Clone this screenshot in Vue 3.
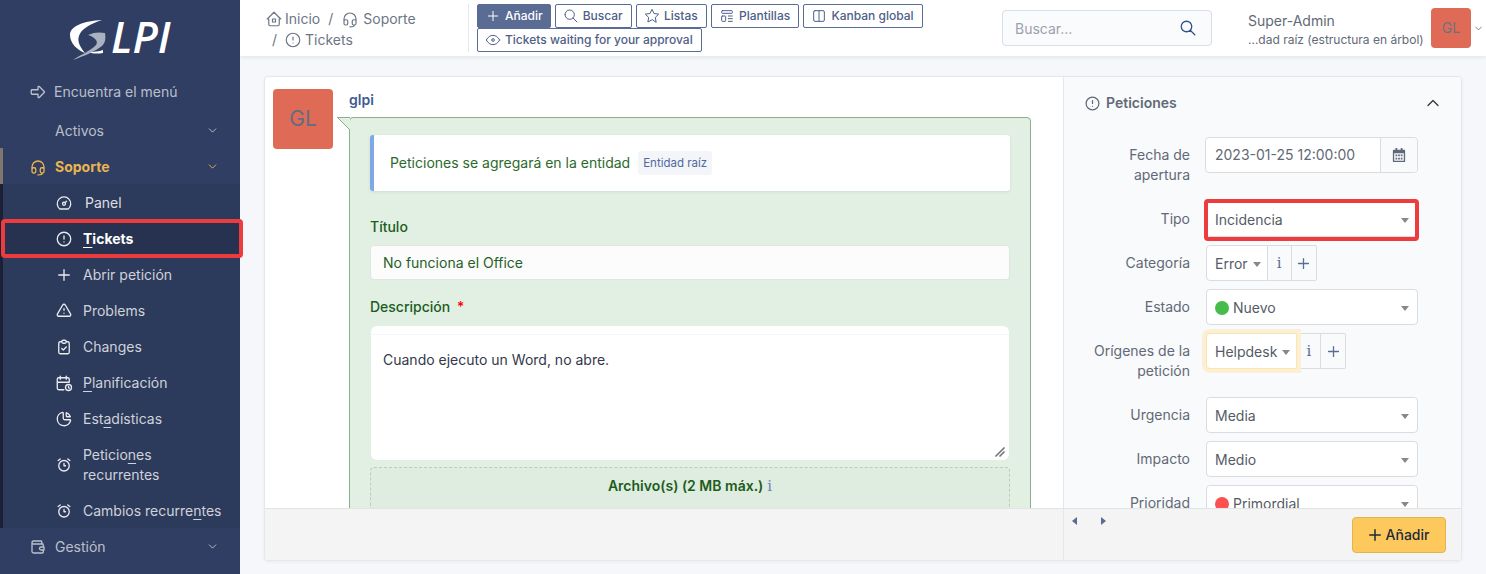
<script setup>
const I = {
  arrow: 'M4 9h8v-3.586a1 1 0 0 1 1.707 -.707l6.586 6.586a1 1 0 0 1 0 1.414l-6.586 6.586a1 1 0 0 1 -1.707 -.707v-3.586h-8a1 1 0 0 1 -1 -1v-4a1 1 0 0 1 1 -1z',
  headset: 'M4 15a2 2 0 0 1 2 -2h1a2 2 0 0 1 2 2v3a2 2 0 0 1 -2 2h-1a2 2 0 0 1 -2 -2zM15 15a2 2 0 0 1 2 -2h1a2 2 0 0 1 2 2v3a2 2 0 0 1 -2 2h-1a2 2 0 0 1 -2 -2zM4 15v-3a8 8 0 0 1 16 0v3M18 20c0 1.657 -2.686 2.5 -6 2.5',
  dash: 'M10 13a2 2 0 1 0 4 0a2 2 0 1 0 -4 0M13.45 11.55l2.05 -2.05M6.4 20a9 9 0 1 1 11.2 0z',
  alert: 'M3 12a9 9 0 1 0 18 0a9 9 0 1 0 -18 0M12 8v4M12 16h.01',
  plus: 'M12 5v14M5 12h14',
  tri: 'M12 9v2m0 4v.01M5 19h14a2 2 0 0 0 1.84 -2.75l-7.1 -12.25a2 2 0 0 0 -3.5 0l-7.1 12.25a2 2 0 0 0 1.75 2.75',
  clip: 'M9 5h-2a2 2 0 0 0 -2 2v12a2 2 0 0 0 2 2h10a2 2 0 0 0 2 -2v-12a2 2 0 0 0 -2 -2h-2M9 5a2 2 0 0 1 2 -2h2a2 2 0 0 1 2 2a2 2 0 0 1 -2 2h-2a2 2 0 0 1 -2 -2M9 14l2 2l4 -4',
  cal: 'M11.795 21h-6.795a2 2 0 0 1 -2 -2v-12a2 2 0 0 1 2 -2h12a2 2 0 0 1 2 2v4M14 18a4 4 0 1 0 8 0a4 4 0 1 0 -8 0M15 3v4M7 3v4M3 11h16M18 16.496v1.504l1 1',
  pie: 'M10 3.2a9 9 0 1 0 10.8 10.8a1 1 0 0 0 -1 -1h-6.8a2 2 0 0 1 -2 -2v-7a.9 .9 0 0 0 -1 -.8M15 3.5a9 9 0 0 1 5.5 5.5h-4.5a1 1 0 0 1 -1 -1v-4.5',
  alarm: 'M5 13a7 7 0 1 0 14 0a7 7 0 1 0 -14 0M12 10v3h2M7 4l-2.75 2M17 4l2.75 2',
  wallet: 'M17 8v-3a1 1 0 0 0 -1 -1h-10a2 2 0 0 0 0 4h12a1 1 0 0 1 1 1v3m0 4v3a1 1 0 0 1 -1 1h-12a2 2 0 0 1 -2 -2v-12M20 12v4h-4a2 2 0 0 1 0 -4h4',
  home: 'M5 12h-2l9 -9l9 9h-2M5 12v7a2 2 0 0 0 2 2h10a2 2 0 0 0 2 -2v-7M10 12h4v4h-4z',
  search: 'M3 10a7 7 0 1 0 14 0a7 7 0 1 0 -14 0M21 21l-6 -6',
  star: 'M12 17.75l-6.172 3.245l1.179 -6.873l-5 -4.867l6.9 -1l3.086 -6.253l3.086 6.253l6.9 1l-5 4.867l1.179 6.873z',
  tpl: 'M5 4h14a1 1 0 0 1 1 1v2a1 1 0 0 1 -1 1h-14a1 1 0 0 1 -1 -1v-2a1 1 0 0 1 1 -1zM5 12h4a1 1 0 0 1 1 1v6a1 1 0 0 1 -1 1h-4a1 1 0 0 1 -1 -1v-6a1 1 0 0 1 1 -1zM14 12h6M14 16h6M14 20h6',
  cols: 'M6 4h12a2 2 0 0 1 2 2v12a2 2 0 0 1 -2 2h-12a2 2 0 0 1 -2 -2v-12a2 2 0 0 1 2 -2zM12 4v16',
  eye: 'M10 12a2 2 0 1 0 4 0a2 2 0 1 0 -4 0M22 12c-2.667 4.667 -6 7 -10 7s-7.333 -2.333 -10 -7c2.667 -4.667 6 -7 10 -7s7.333 2.333 10 7',
  down: 'M6 9l6 6l6 -6',
  up: 'M6 15l6 -6l6 6',
}

const sub = [
  { icon: 'dash', pre: 'Panel', wide: true, bright: true },
  { icon: 'alert', u: 'T', post: 'ickets', active: true },
  { icon: 'plus', pre: 'Abrir petición' },
  { icon: 'tri', pre: 'Problems' },
  { icon: 'clip', pre: 'Changes' },
  { icon: 'cal', u: 'P', post: 'lanificación' },
  { icon: 'pie', pre: 'Est', u: 'a', post: 'dísticas' },
  { icon: 'alarm', pre: 'Peticio', u: 'n', post: 'es recurrentes', tall: true },
  { icon: 'alarm', pre: 'Cambios recurre', u: 'n', post: 'tes' },
]

const buttons = [
  { icon: 'plus', text: 'Añadir', primary: true },
  { icon: 'search', text: 'Buscar' },
  { icon: 'star', text: 'Listas' },
  { icon: 'tpl', text: 'Plantillas' },
  { icon: 'cols', text: 'Kanban global' },
  { icon: 'eye', text: 'Tickets waiting for your approval' },
]
</script>

<template>
  <div class="app">
    <aside class="side">
      <div class="logo">
        <svg class="g" viewBox="0 0 46 44" width="46" height="44">
          <path fill="#fff" d="M32 1 C 14 2 0 7 0 16 C 0 24 7 31 15 34 C 10 28 7 22 9 17 C 11 10 20 5 32 1z" />
          <path fill="#fff" d="M17 32 C 22 33 28 33 33 31 L33 34 C 27 35 21 35 17 32z" />
          <path fill="#aab2c2" d="M18 16 C 24 13 30 13 35 14 C 36 20 35 24 32 27 C 26 32 14 37 3 41 C 12 35 22 31 26 26 C 29 22 24 18 18 16z" />
        </svg>
        <span class="lpi">LPI</span>
      </div>

      <a class="item top find">
        <svg class="ic" viewBox="0 0 24 24"><path :d="I.arrow" /></svg>
        <span>Encuentra el menú</span>
      </a>
      <a class="item top">
        <span class="noicon">Activos</span>
        <svg class="chev" viewBox="0 0 24 24"><path :d="I.down" /></svg>
      </a>
      <a class="item top current">
        <svg class="ic" viewBox="0 0 24 24"><path :d="I.headset" /></svg>
        <span>Soporte</span>
        <svg class="chev" viewBox="0 0 24 24"><path :d="I.down" /></svg>
      </a>
      <div class="submenu">
        <a
          v-for="s in sub"
          :key="s.icon + s.post + s.pre"
          class="item subitem"
          :class="{ active: s.active, tall: s.tall, bright: s.bright, wide: s.wide }"
        >
          <svg class="ic" viewBox="0 0 24 24"><path :d="I[s.icon]" /></svg>
          <span class="lbl">{{ s.pre }}<u v-if="s.u">{{ s.u }}</u>{{ s.post }}</span>
        </a>
        <div class="redframe"></div>
      </div>
      <a class="item top">
        <svg class="ic" viewBox="0 0 24 24"><path :d="I.wallet" /></svg>
        <span>Gestión</span>
        <svg class="chev" viewBox="0 0 24 24"><path :d="I.down" /></svg>
      </a>
    </aside>

    <div class="main">
      <header class="head">
        <div class="crumbs">
          <div class="crumb-line">
            <svg class="cic first" viewBox="0 0 24 24"><path :d="I.home" /></svg>
            <span>Inicio</span><i>/</i>
            <svg class="cic" viewBox="0 0 24 24"><path :d="I.headset" /></svg>
            <span>Soporte</span>
          </div>
          <div class="crumb-line second">
            <i>/</i>
            <svg class="cic" viewBox="0 0 24 24"><path :d="I.alert" /></svg>
            <span>Tickets</span>
          </div>
        </div>
        <div class="btns">
          <a v-for="b in buttons" :key="b.text" class="tbtn" :class="{ primary: b.primary }">
            <svg viewBox="0 0 24 24"><path :d="I[b.icon]" /></svg>
            <span>{{ b.text }}</span>
          </a>
        </div>
        <div class="search">
          <span>Buscar...</span>
          <svg viewBox="0 0 24 24"><path :d="I.search" /></svg>
        </div>
        <div class="user">
          <div class="uname">Super-Admin</div>
          <div class="uent">...dad raíz (estructura en árbol)</div>
        </div>
        <div class="uavatar">GL</div>
        <svg class="uchev" viewBox="0 0 24 24"><path :d="I.down" /></svg>
      </header>

      <main class="content">
        <section class="card">
          <div class="upper">
            <div class="left">
              <div class="avatar">GL</div>
              <div class="timeline">
                <div class="author">glpi</div>
                <div class="bubble">
                  <svg class="tip" viewBox="0 0 13 14" width="13" height="14">
                    <path d="M0 0H13V13z" fill="#e1f0e3" />
                    <path d="M0 0L13 13" stroke="#8aae8e" fill="none" />
                    <path d="M0 .5H13" stroke="#8aae8e" fill="none" />
                  </svg>
                  <div class="note">
                    <span>Peticiones se agregará en la entidad</span>
                    <span class="badge">Entidad raíz</span>
                  </div>
                  <label class="flabel">Título</label>
                  <div class="finput">No funciona el Office</div>
                  <label class="flabel desc">Descripción <b>*</b></label>
                  <div class="editor">
                    <p>Cuando ejecuto un Word, no abre.</p>
                    <svg class="grip" viewBox="0 0 10 10" width="10" height="10">
                      <path d="M1 9L9 1M5 9L9 5" stroke="#777" fill="none" />
                    </svg>
                  </div>
                  <div class="drop">
                    <b>Archivo(s) (2 MB máx.)</b> <span class="inf blue">i</span>
                  </div>
                </div>
              </div>
            </div>

            <div class="right">
              <div class="rhead">
                <svg viewBox="0 0 24 24"><path :d="I.alert" /></svg>
                <span>Peticiones</span>
                <svg class="rup" viewBox="0 0 24 24"><path :d="I.up" /></svg>
              </div>

              <div class="row two">
                <label>Fecha de apertura</label>
                <div class="date">
                  <span>2023-01-25 12:00:00</span>
                  <div class="dbtn">
                    <svg viewBox="0 0 16 16" width="14" height="14">
                      <path fill="#5f6878" d="M4 0h2v2h4V0h2v2h2a1 1 0 0 1 1 1v12a1 1 0 0 1-1 1H2a1 1 0 0 1-1-1V3a1 1 0 0 1 1-1h2zM2.500 6v8.500h11V6zM4 7.500h2v2H4zm3 0h2v2H7zm3 0h2v2h-2zM4 11h2v2H4zm3 0h2v2H7zm3 0h2v2h-2z" />
                    </svg>
                  </div>
                </div>
              </div>

              <div class="row">
                <label>Tipo</label>
                <div class="sel red"><span>Incidencia</span><em></em></div>
              </div>

              <div class="row">
                <label>Categoría</label>
                <div class="group">
                  <div class="sel small"><span>Error</span><em></em></div>
                  <div class="addon"><span class="inf">i</span></div>
                  <div class="addon"><svg viewBox="0 0 24 24"><path :d="I.plus" /></svg></div>
                </div>
              </div>

              <div class="row">
                <label>Estado</label>
                <div class="sel"><span><s class="dot green"></s>Nuevo</span><em></em></div>
              </div>

              <div class="row two">
                <label>Orígenes de la petición</label>
                <div class="group">
                  <div class="sel small focus"><span>Helpdesk</span><em></em></div>
                  <div class="addon"><span class="inf">i</span></div>
                  <div class="addon"><svg viewBox="0 0 24 24"><path :d="I.plus" /></svg></div>
                </div>
              </div>

              <div class="row">
                <label>Urgencia</label>
                <div class="sel"><span>Media</span><em></em></div>
              </div>

              <div class="row">
                <label>Impacto</label>
                <div class="sel"><span>Medio</span><em></em></div>
              </div>

              <div class="row">
                <label>Prioridad</label>
                <div class="sel"><span><s class="dot redd"></s>Primordial</span><em></em></div>
              </div>
            </div>
          </div>

          <footer class="foot">
            <div class="foot-left"></div>
            <div class="foot-right">
              <div class="arrows">
                <svg viewBox="0 0 6 8" width="6" height="8"><path d="M5 0v8L0 4z" fill="#5a6c94" /></svg>
                <svg viewBox="0 0 6 8" width="6" height="8"><path d="M1 0v8l5-4z" fill="#5a6c94" /></svg>
              </div>
              <a class="submit">
                <svg viewBox="0 0 24 24"><path :d="I.plus" /></svg>
                <span>Añadir</span>
              </a>
            </div>
          </footer>
        </section>
      </main>
    </div>
  </div>
</template>

<style>
html, body { margin: 0; height: 100%; overflow: hidden; }
</style>

<style scoped>
.app {
  display: flex;
  height: 574px;
  font-family: Inter, "Liberation Sans", sans-serif;
  font-size: 14px;
  line-height: 20px;
  background: #f5f7fb;
  color: #626976;
  overflow: hidden;
}
svg { fill: none; stroke: currentColor; stroke-width: 1.75; stroke-linecap: round; stroke-linejoin: round; flex: none; }

/* sidebar */
.side { width: 240px; flex: none; background: #2f3e62; color: rgba(255,255,255,.68); display: flex; flex-direction: column; position: relative; z-index: 2; }
.logo { height: 73px; display: flex; position: relative; padding: 19px 0 0 70px; box-sizing: border-box; }
.g { stroke: none; }
.g path { stroke: none; }
.lpi { position: absolute; left: 111px; top: 15px; font-family: "Open Sans", sans-serif; font-style: italic; font-weight: 600; font-size: 43px; line-height: 44px; color: #fff; }
.item { display: flex; align-items: center; height: 36px; flex: none; box-sizing: border-box; position: relative; padding-top: 2px; }
.item.top { padding-left: 29px; }
.item.top .ic { margin-right: 8px; }
.item.find { margin-bottom: 3px; }
.item.find .ic { margin-right: 7px; }
.ic { width: 18px; height: 18px; }
.noicon { margin-left: 26px; }
.chev { position: absolute; left: 206px; top: 12px; width: 13px; height: 13px; }
.current { color: #eab54e; font-weight: 700; border-left: 3px solid #7e776c; padding-left: 26px !important; }
.current .chev { left: 203px; }
.submenu { background: #2c3a5b; border-left: 3px solid #1b2134; position: relative; flex: none; }
.subitem { padding-left: 52px; color: rgba(255,255,255,.78); }
.subitem .ic { margin-right: 10px; color: rgba(255,255,255,.9); }
.subitem.wide .ic { margin-right: 12px; }
.subitem.bright { color: rgba(255,255,255,.85); }
.subitem.active { background: #263250; color: #fff; font-weight: 700; }
.subitem.tall { height: 56px; }
.lbl { width: 146px; }
.lbl u { text-underline-offset: 3px; text-decoration-thickness: 1px; }
.redframe { position: absolute; left: -2px; top: 35px; width: 242px; height: 39px; border: 4px solid #ee3b3e; border-radius: 4px; box-sizing: border-box; }

/* header */
.main { flex: 1; min-width: 0; display: flex; flex-direction: column; }
.head { height: 56px; flex: none; background: #fff; box-shadow: 0 1px 4px rgba(30,41,59,.1); display: flex; align-items: center; position: relative; box-sizing: border-box; padding-left: 25px; }
.crumbs { width: 203px; height: 48px; border-right: 1px solid #e6e8ec; font-size: 14px; color: #6c7686; flex: none; }
.crumb-line { display: flex; align-items: center; height: 21px; margin-top: 4px; }
.crumb-line.second { margin-top: 0; padding-left: 7px; }
.crumb-line i { font-style: normal; margin: 0 8px 0 8px; }
.crumb-line.second i { margin: 0 7px 0 0; }
.cic { width: 18px; height: 18px; margin-right: 4px; stroke-width: 1.6; }
.cic.first { margin-right: 2px; }
.crumb-line.second .cic { margin-right: 3px; }
.btns { width: 460px; margin-left: 8px; display: flex; flex-wrap: wrap; column-gap: 4px; align-content: flex-start; height: 48px; flex: none; }
.tbtn { height: 24px; box-sizing: border-box; border: 1px solid #5a6b94; border-radius: 2px; display: flex; align-items: center; padding: 0 8.300px 0 7px; font-size: 12px; font-weight: 500; color: #4e6088; gap: 4px; white-space: nowrap; }
.tbtn svg { width: 16px; height: 16px; stroke-width: 1.5; }
.tbtn.primary { background: #5a6b94; color: #fff; padding-right: 7px; }
.search { position: absolute; left: 762px; top: 10px; width: 210px; height: 36px; box-sizing: border-box; border: 1px solid #dadfe5; border-radius: 4px; background: #fafbfc; display: flex; align-items: center; justify-content: space-between; padding: 2px 14px 0 12px; color: #9aa2ad; }
.search svg { width: 18px; height: 18px; color: #32508c; margin-top: -2px; }
.user { position: absolute; left: 1008px; top: 10px; color: #626976; }
.uname { font-size: 14px; line-height: 21px; }
.uent { font-size: 12px; line-height: 17px; }
.uavatar { position: absolute; left: 1191px; top: 8px; width: 40px; height: 40px; border-radius: 4px; background: #df6a56; color: #6c7280; display: flex; align-items: center; justify-content: center; font-size: 14px; }
.uchev { position: absolute; left: 1233px; top: 23px; width: 11px; height: 11px; color: #626976; }

/* content */
.content { flex: 1; min-height: 0; padding: 20px 24px 13px; box-sizing: border-box; display: flex; }
.card { flex: 1; min-width: 0; display: flex; flex-direction: column; border: 1px solid #e4e7ec; border-radius: 4px; background: #fff; box-shadow: 0 1px 3px rgba(30,41,59,.06); overflow: hidden; }
.upper { flex: 1; min-height: 0; display: flex; overflow: hidden; }
.left { width: 798px; flex: none; display: flex; gap: 16px; padding: 12px 0 0 8px; box-sizing: border-box; }
.avatar { width: 60px; height: 60px; flex: none; border-radius: 4px; background: #df6a56; color: #626d80; font-size: 21px; display: flex; align-items: center; justify-content: center; }
.timeline { width: 682px; flex: none; }
.author { font-weight: 600; color: #3f5a94; line-height: 22px; margin-bottom: 6px; font-size: 14px; }
.bubble { position: relative; background: #e1f0e3; border: 1px solid #8aae8e; border-radius: 4px 4px 0 0; padding: 17px 20px; color: #2b6a2b; }
.tip { position: absolute; left: -13px; top: -1px; stroke: none; }
.tip path[stroke] { stroke-width: 1; }
.note { height: 56px; box-sizing: border-box; background: #fff; border-left: 4px solid #7fa9e6; border-radius: 3px; box-shadow: 0 1px 3px rgba(30,41,59,.1); display: flex; align-items: center; padding-left: 16px; gap: 8px; }
.badge { background: #f3f5f9; color: #4f689f; font-size: 11.500px; padding: 2px 5px; border-radius: 3px; height: 24px; box-sizing: border-box; line-height: 20px; }
.flabel { display: block; color: #1d5c1d; margin-top: 26px; margin-bottom: 8px; font-weight: 500; line-height: 20px; }
.flabel.desc { margin-top: 17px; margin-bottom: 9px; }
.flabel b { color: #f00; margin-left: 3px; font-weight: 500; }
.finput { height: 35px; box-sizing: border-box; background: #fcfcfc; border: 1px solid #dfe5df; border-radius: 4px; padding: 0 12px; line-height: 33px; color: #266026; }
.editor { height: 134px; margin: 0 1px; background: #fff; border-radius: 6px; position: relative; padding: 24px 12px 0; box-sizing: border-box; color: #33384a; }
.editor::before { content: ''; position: absolute; left: 0; right: 0; top: 8px; height: 1px; background: #f6f7f8; }
.editor p { margin: 0; }
.grip { position: absolute; right: 4px; bottom: 3px; stroke: none; }
.drop { margin-top: 7px; height: 80px; border: 1px dashed #b9cdbb; border-radius: 4px; background: #deeddf; text-align: center; padding-top: 8px; box-sizing: border-box; color: #1d5c1d; }
.drop b { font-weight: 600; }
.inf { font-family: "DejaVu Serif", serif; font-weight: 400; font-size: 15px; color: #5a6c94; }
.inf.blue { color: #6a84b8; }

/* right */
.right { flex: 1; min-width: 0; background: #f9fafc; border-left: 1px solid #e4e7ec; box-sizing: border-box; padding-left: 20px; }
.rhead { height: 52px; margin-bottom: 8px; display: flex; align-items: center; font-weight: 600; color: #626976; gap: 5px; position: relative; }
.rhead svg { width: 17px; height: 17px; stroke-width: 1.75; }
.rhead .rup { position: absolute; left: 339px; width: 20px; height: 20px; color: #333; stroke-width: 1.5; }
.row { display: flex; gap: 16px; min-height: 36px; margin-bottom: 8px; }
.row.two { min-height: 56px; }
.row label { width: 106px; flex: none; text-align: right; padding-top: 8px; color: #626976; line-height: 20px; }
.sel { width: 212px; height: 36px; box-sizing: border-box; background: #fff; border: 1px solid #dadcdf; border-radius: 4px; display: flex; align-items: center; justify-content: space-between; padding: 2px 8px 0; color: #555b66; position: relative; flex: none; }
.sel em { width: 0; height: 0; border-left: 4px solid transparent; border-right: 4px solid transparent; border-top: 5px solid #888; margin-top: 1px; }
.sel.red::after { content: ''; position: absolute; left: -3px; right: -2px; top: -3px; bottom: -5px; border: 4px solid #ee3b3e; border-radius: 4px; }
.sel.small { width: auto; border-radius: 4px 0 0 4px; gap: 5px; padding-right: 6px; }
.sel.focus { box-shadow: 0 0 0 4px #fcefd3; border-color: #fce4b0; z-index: 1; }
.group { display: flex; height: 36px; }
.addon { width: 24px; height: 36px; box-sizing: border-box; border: 1px solid #dadcdf; border-left: 0; background: #f9fafc; display: flex; align-items: center; justify-content: center; color: #5a6c94; }
.addon:last-child { border-radius: 0 2px 2px 0; width: 25px; }
.addon svg { width: 17px; height: 17px; stroke-width: 1.8; }
.date { margin-left: -1px; width: 213px; height: 36px; box-sizing: border-box; display: flex; background: #fff; border: 1px solid #dadcdf; border-radius: 4px; color: #626976; align-items: center; padding-left: 9px; justify-content: space-between; }
.dbtn { width: 37px; height: 34px; box-sizing: border-box; border-left: 1px solid #dadcdf; background: #f9fafc; display: flex; align-items: center; justify-content: center; border-radius: 0 4px 4px 0; }
.dbtn svg { stroke: none; }
.dbtn path { stroke: none; }
.dot { display: inline-block; width: 14px; height: 14px; border-radius: 50%; margin-right: 4px; vertical-align: -2px; }
.green { background: #46bd4b; }
.redd { background: #fb5151; }

/* footer */
.foot { height: 52px; flex: none; background: #f4f4f4; border-top: 1px solid #e3e3e3; display: flex; box-sizing: border-box; }
.foot-left { width: 798px; flex: none; }
.foot-right { flex: 1; border-left: 1px solid #e4e7ec; display: flex; justify-content: space-between; align-items: flex-start; padding: 8px 15px 0 8px; position: relative; }
.arrows { display: flex; gap: 22px; }
.arrows svg { stroke: none; }
.arrows path { stroke: none; }
.submit { width: 94px; height: 36px; box-sizing: border-box; background: #fec95c; border: 1px solid #e3b34f; border-radius: 4px; display: flex; align-items: center; justify-content: center; gap: 2px; padding-right: 3px; color: #1e293b; font-weight: 500; }
.submit svg { width: 18px; height: 18px; stroke-width: 2; }
</style>
